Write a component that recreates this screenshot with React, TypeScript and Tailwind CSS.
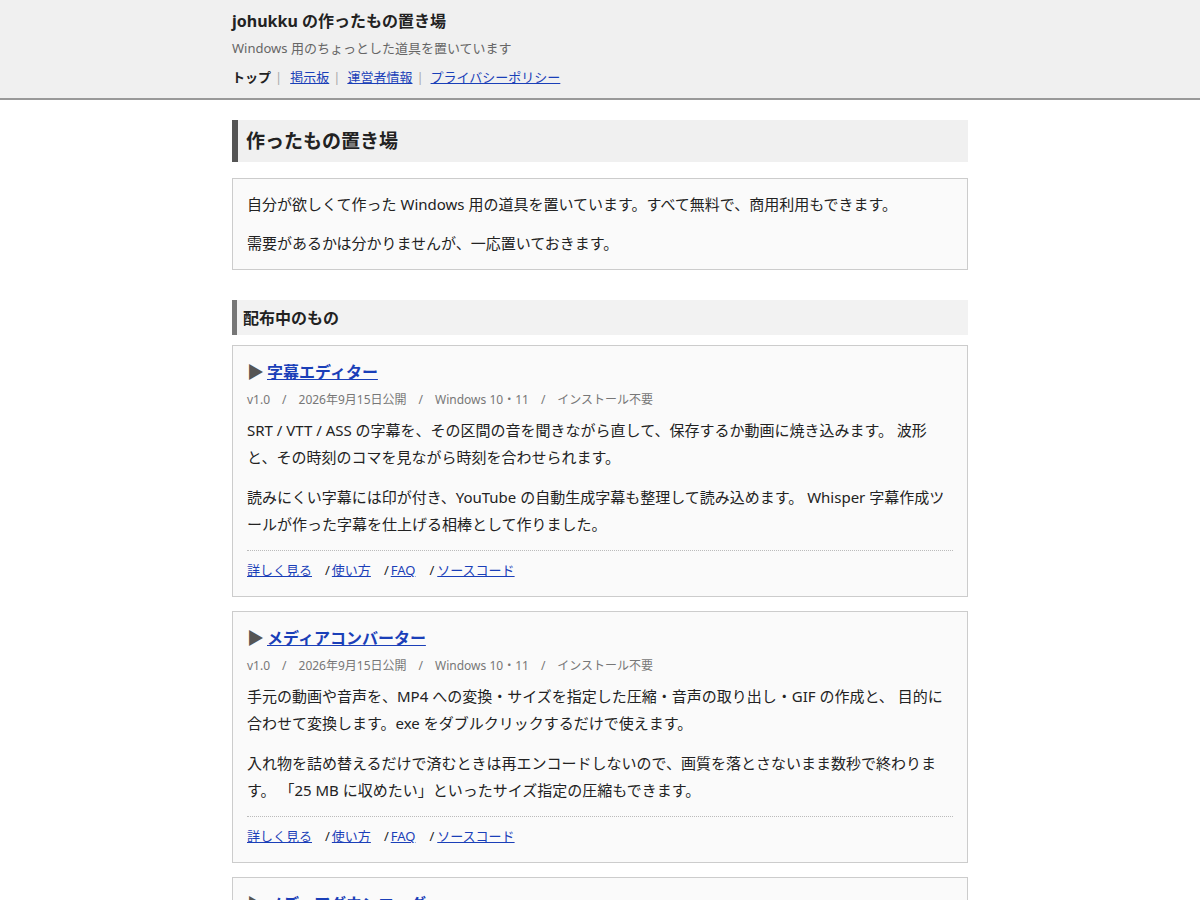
const font = { fontFamily: '"Noto Sans", "Noto Sans CJK JP", sans-serif' };

type Tool = {
  name: string;
  meta: string[];
  body: string[];
};

const tools: Tool[] = [
  {
    name: "字幕エディター",
    meta: ["v1.0", "2026年9月15日公開", "Windows 10・11", "インストール不要"],
    body: [
      "SRT / VTT / ASS の字幕を、その区間の音を聞きながら直して、保存するか動画に焼き込みます。 波形と、その時刻のコマを見ながら時刻を合わせられます。",
      "読みにくい字幕には印が付き、YouTube の自動生成字幕も整理して読み込めます。 Whisper 字幕作成ツールが作った字幕を仕上げる相棒として作りました。",
    ],
  },
  {
    name: "メディアコンバーター",
    meta: ["v1.0", "2026年9月15日公開", "Windows 10・11", "インストール不要"],
    body: [
      "手元の動画や音声を、MP4 への変換・サイズを指定した圧縮・音声の取り出し・GIF の作成と、 目的に合わせて変換します。exe をダブルクリックするだけで使えます。",
      "入れ物を詰め替えるだけで済むときは再エンコードしないので、画質を落とさないまま数秒で終わります。 「25 MB に収めたい」といったサイズ指定の圧縮もできます。",
    ],
  },
  {
    name: "メディアダウンローダー",
    meta: ["v1.0", "2026年9月15日公開", "Windows 10・11", "インストール不要"],
    body: [
      "URL を貼り付けるだけで、動画や音声をまとめて保存します。",
    ],
  },
];

function ToolCard({ tool }: { tool: Tool }) {
  return (
    <div className="border border-[#cccccc] bg-[#fafafa] px-[14px] pt-[13px] pb-[16px]">
      <h3 className="flex items-center text-[16px] font-bold leading-[26px] text-[#555]">
        <span className="mr-[3px] text-[17px] leading-[26px]">▶</span>
        <a href="#" className="text-[#1a3fb8] underline">
          {tool.name}
        </a>
      </h3>
      <div className="mt-[5px] flex text-[12px] leading-[20px] text-[#777]">
        {tool.meta.map((m, i) => (
          <span key={m} className="flex">
            {i > 0 && <span className="mx-[12px]">/</span>}
            {m}
          </span>
        ))}
      </div>
      {tool.body.map((p, i) => (
        <p key={i} className={`${i === 0 ? "mt-[7px]" : "mt-[13px]"} text-[15px] leading-[27px] text-[#222]`}>
          {p}
        </p>
      ))}
      <div className="mt-[12px] border-t border-dotted border-[#bbb] pt-[9px] text-[13px] leading-[20px] text-[#222]">
        <a href="#" className="text-[#1a3fb8] underline">詳しく見る</a>
        <span className="ml-[13px] mr-[2px]">/</span>
        <a href="#" className="text-[#1a3fb8] underline">使い方</a>
        <span className="ml-[13px] mr-[2px]">/</span>
        <a href="#" className="text-[#1a3fb8] underline">FAQ</a>
        <span className="ml-[14px] mr-[3px]">/</span>
        <a href="#" className="text-[#1a3fb8] underline">ソースコード</a>
      </div>
    </div>
  );
}

export default function App() {
  return (
    <div className="min-h-screen bg-white text-[#222]" style={font}>
      <header className="border-b-2 border-[#999] bg-[#f0f0f0]">
        <div className="mx-auto w-[736px] pt-[9px] pb-[11px]">
          <div className="text-[16px] font-bold leading-[24px] text-[#222]">johukku の作ったもの置き場</div>
          <div className="mt-[5px] text-[13px] leading-[20px] text-[#666]">Windows 用のちょっとした道具を置いています</div>
          <nav className="mt-[9px] flex items-center text-[13px] leading-[20px]">
            <span className="font-bold text-[#222]">トップ</span>
            <span className="ml-[4px] mr-[8px] text-[#aaa]">|</span>
            <a href="#" className="text-[#1a3fb8] underline">掲示板</a>
            <span className="ml-[4px] mr-[7px] text-[#aaa]">|</span>
            <a href="#" className="text-[#1a3fb8] underline">運営者情報</a>
            <span className="ml-[4px] mr-[7px] text-[#aaa]">|</span>
            <a href="#" className="text-[#1a3fb8] underline">プライバシーポリシー</a>
          </nav>
        </div>
      </header>

      <main className="mx-auto w-[736px] pt-[20px] pb-[20px]">
        <h1 className="flex h-[42px] items-center border-l-[6px] border-[#555] bg-[#f0f0f0] pl-[8px] text-[19px] font-bold text-[#222]">
          作ったもの置き場
        </h1>

        <div className="mt-[16px] border border-[#cccccc] bg-[#fafafa] px-[14px] pt-[12px] pb-[12px] text-[15px] leading-[27px]">
          <p>自分が欲しくて作った Windows 用の道具を置いています。すべて無料で、商用利用もできます。</p>
          <p className="mt-[12px]">需要があるかは分かりませんが、一応置いておきます。</p>
        </div>

        <h2 className="mt-[30px] flex h-[35px] items-center border-l-[5px] border-[#777] bg-[#f2f2f2] pl-[6px] text-[16px] font-bold text-[#222]">
          配布中のもの
        </h2>

        <div className="mt-[10px] flex flex-col gap-[14px]">
          {tools.map((t) => (
            <ToolCard key={t.name} tool={t} />
          ))}
        </div>
      </main>
    </div>
  );
}
